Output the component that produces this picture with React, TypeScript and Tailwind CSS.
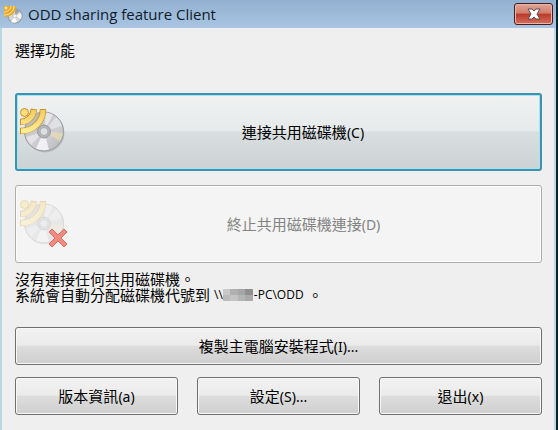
import type { ReactNode } from "react";

const discPaint = "url(#disc)";
const wavePaint = "url(#wave)";

const IconPaints = () => (
  <svg className="absolute size-0" aria-hidden="true">
    <defs>
      <linearGradient id="disc" x1="0" y1="0" x2="1" y2="1">
        <stop offset="0" stopColor="#a4a4a8" />
        <stop offset="0.35" stopColor="#cacace" />
        <stop offset="0.65" stopColor="#cdcdd1" />
        <stop offset="1" stopColor="#b6b6ba" />
      </linearGradient>
      <linearGradient id="wave" x1="0" y1="0" x2="0" y2="1">
        <stop offset="0" stopColor="#f6cb62" />
        <stop offset="1" stopColor="#ffec92" />
      </linearGradient>
    </defs>
  </svg>
);

const DiscIcon = ({ className }: { className: string }) => (
  <svg viewBox="0 2 48 48" className={className} aria-hidden="true">
    <circle cx="27" cy="27" r="19.5" fill="#8a8f92" opacity="0.35" />
    <circle cx="26" cy="25.5" r="19.5" fill={discPaint} stroke="#9a9a9e" />
    <path d="M26 25.500 L28 6.500 A19 19 0 0 1 35 8.700 Z" fill="#f2f2f4" opacity="0.7" />
    <path d="M26 25.500 L38 11 A19 19 0 0 1 44 20 Z" fill="#e6e6e9" opacity="0.8" />
    <path d="M26 25.500 L45 27 A19 19 0 0 1 42 35 Z" fill="#f0e2ae" opacity="0.6" />
    <path d="M26 25.500 L31 43.500 A19 19 0 0 1 18 42.500 Z" fill="#f7f7f9" opacity="0.85" />
    <path d="M26 25.500 L13 39 A19 19 0 0 1 8 31 Z" fill="#e8e8eb" opacity="0.8" />
    <path d="M7 22 Q19 20 22 9 L26 14 Q20 25 8 27 Z" fill="#7c8f42" opacity="0.6" />
    <circle cx="26" cy="25.5" r="6.5" fill="#b4b6ba" stroke="#96989c" />
    <circle cx="26" cy="25.5" r="4" fill="#dde0e2" stroke="#a8aaae" />
    <path d="M2 16 C10 16 15 11 16 3 M2 25 C16 25 25 15 25 3" fill="none" stroke="#c6942f" strokeWidth="6.5" />
    <path d="M3 16 C10 16 15 11 16 4 M3 25 C16 25 25 15 25 4" fill="none" stroke={wavePaint} strokeWidth="5" />
    <circle cx="6.500" cy="6.500" r="4" fill="#ffdb7a" stroke="#c6942f" />
  </svg>
);

const TitleIcon = () => (
  <svg viewBox="0 0 20 20" className="size-5" aria-hidden="true">
    <circle cx="12" cy="12" r="7" fill="#d6d6d8" stroke="#8d8c90" />
    <path d="M12 12 L12 5 A7 7 0 0 1 17 7 Z" fill="#a3a3a7" />
    <path d="M12 12 L18 9 A7 7 0 0 1 18 15 Z" fill="#f6f6f6" />
    <path d="M12 12 L14 18 A7 7 0 0 1 8 18 Z" fill="#fafafa" />
    <path d="M1 2 H13 C13 9 8 13 1 13 Z" fill="#e8a92c" />
    <path d="M1 8 C5 8 8 5 8 2 M1 11 C7 11 11 7 11 2" fill="none" stroke="#ffe29a" />
    <circle cx="3" cy="4" r="1.5" fill="#ffe29a" />
    <circle cx="12" cy="12" r="2" fill="#f2f2f2" stroke="#aaa" strokeWidth="0.5" />
  </svg>
);

const Label = ({ text, hotkey }: { text: string; hotkey: string }) => (
  <>
    {text}
    <span className="font-['Noto_Sans',sans-serif] text-[14px]">{hotkey}</span>
  </>
);

const PushButton = ({ children }: { children: ReactNode }) => (
  <button
    type="button"
    className="h-[38px] w-full rounded-[3px] border border-[#707070] bg-[linear-gradient(#f2f2f2,#ebebeb_48%,#dddddd_50%,#cfcfcf)] text-center shadow-[inset_0_0_0_1px_#f8f8f8]"
  >
    {children}
  </button>
);

const mosaic = [
  "bg-[#c9c9c9]",
  "bg-[#b0b0b0]",
  "bg-[#a6a6a6]",
  "bg-[#8f8f8f]",
  "bg-[#bcbcbc]",
  "bg-[#c4c4c4]",
  "bg-[#b5b5b5]",
  "bg-[#aaaaaa]",
];

export default function App() {
  return (
    <div className="min-h-screen bg-[#06262c] pr-[2px] font-['Open_Sans','Noto_Sans_CJK_TC',sans-serif] text-[15px] leading-4 text-black">
      <IconPaints />
      <div className="flex min-h-screen flex-col bg-[#efefef]">
        <header className="flex h-7 items-center bg-linear-to-b from-[#92b0d0] to-[#a9c5e3] pr-[3px] pl-[3px]">
          <TitleIcon />
          <h1 className="ml-[5px] flex-1 text-[#101c2c]">ODD sharing feature Client</h1>
          <button
            type="button"
            aria-label="Close"
            className="flex h-[22px] w-[39px] items-center justify-center rounded-[3px] border border-[#4a1c1c] bg-[linear-gradient(#e2a699,#d27c6c_46%,#b9392a_50%,#d5705c)] shadow-[inset_0_0_0_1px_#e9b5a8]"
          >
            <svg viewBox="0 0 14 12" className="h-3 w-3.5">
              <path d="M1 1h4l2 2 2-2h4L10 6l3 5H9L7 9l-2 2H1l3-5z" fill="#fff" stroke="#5e4a52" />
            </svg>
          </button>
        </header>
        <main className="flex flex-1 flex-col border-x-2 border-l-[#b4d8e4] border-r-[#b9d9ee] pr-3 pb-[15px] pl-[13px]">
          <h2 className="mt-3.5">選擇功能</h2>
          <button
            type="button"
            className="mt-[35px] flex h-[78px] items-center rounded-[3px] border-2 border-[#3c93ae] bg-[linear-gradient(#f0f2f2,#e6eaeb_48%,#d9dee0_50%,#cdd2d4)] pl-px shadow-[inset_0_0_0_1px_#a5e4f2]"
          >
            <DiscIcon className="size-12" />
            <span className="flex-1">
              <Label text="連接共用磁碟機" hotkey="(C)" />
            </span>
          </button>
          <button
            type="button"
            disabled
            className="mt-3.5 flex h-[78px] items-center rounded-[3px] border border-[#adadad] bg-[#f4f4f4] pl-[2px] text-[#838383] shadow-[inset_0_0_0_1px_#fcfcfc]"
          >
            <span className="relative">
              <DiscIcon className="size-12 opacity-30" />
              <svg viewBox="0 0 20 20" className="absolute -right-[2px] bottom-0 size-5" aria-hidden="true">
                <path
                  d="M4 1 L10 7 L16 1 L19 4 L13 10 L19 16 L16 19 L10 13 L4 19 L1 16 L7 10 L1 4 Z"
                  fill="#f08d80"
                  stroke="#e06a60"
                />
              </svg>
            </span>
            <span className="flex-1">
              <Label text="終止共用磁碟機連接" hotkey="(D)" />
            </span>
          </button>
          <p className="mt-2">沒有連接任何共用磁碟機。</p>
          <p className="flex">
            系統會自動分配磁碟機代號到
            <span className="ml-1 text-[12px]">\\</span>
            <span className="mt-[2px] grid h-3 w-[30px] grid-cols-4">
              {mosaic.map((shade, index) => (
                <span key={index} className={shade} />
              ))}
            </span>
            <span className="ml-px text-[12px]">-PC\ODD</span>
            <span className="ml-1">。</span>
          </p>
          <div className="mt-6">
            <PushButton>
              <Label text="複製主電腦安裝程式" hotkey="(I)..." />
            </PushButton>
          </div>
          <div className="mt-3 grid grid-cols-3 gap-[19px]">
            <PushButton>
              <Label text="版本資訊" hotkey="(a)" />
            </PushButton>
            <PushButton>
              <Label text="設定" hotkey="(S)..." />
            </PushButton>
            <PushButton>
              <Label text="退出" hotkey="(x)" />
            </PushButton>
          </div>
        </main>
      </div>
    </div>
  );
}
